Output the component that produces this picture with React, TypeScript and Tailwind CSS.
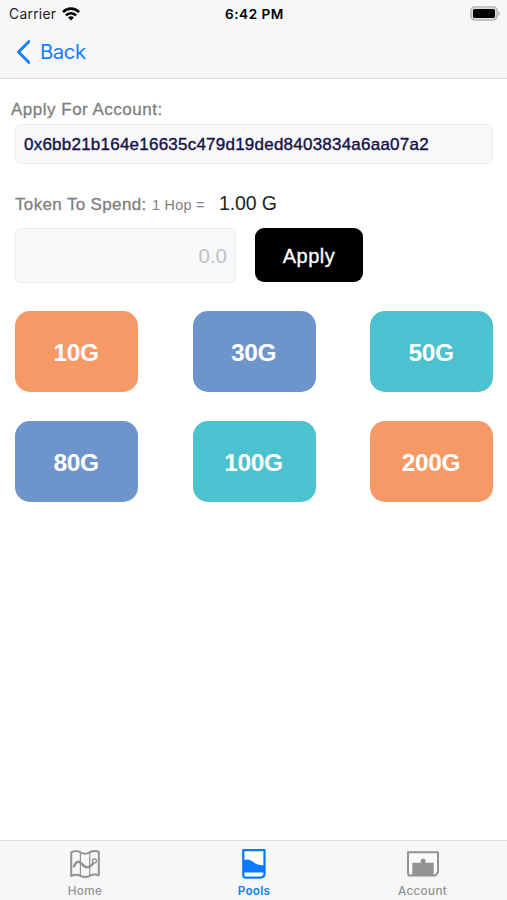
import clsx from "clsx";

const amounts = [
  { label: "10G", color: "bg-[#f69966]" },
  { label: "30G", color: "bg-[#6d95cb]" },
  { label: "50G", color: "bg-[#4cc1d0]" },
  { label: "80G", color: "bg-[#6d95cb]" },
  { label: "100G", color: "bg-[#4cc1d0]" },
  { label: "200G", color: "bg-[#f69966]" },
];

const WifiIcon = () => (
  <svg width="18" height="14" viewBox="0 0 18 14" fill="none" stroke="#000" strokeWidth="2.6">
    <path d="M1 5.1C5.4.5 12.6.5 17 5.1" />
    <path d="M3.9 8.4c2.8-2.9 7.4-2.9 10.2 0" />
    <path d="M9 13.4 6.1 10.5c1.6-1.6 4.2-1.6 5.8 0z" fill="#000" stroke="none" />
  </svg>
);

const BatteryIcon = () => (
  <svg width="31" height="15" viewBox="0 0 31 15">
    <rect x="0.9" y="0.9" width="26.2" height="13.2" rx="4" fill="#dcdcdc" stroke="#b0b0b0" strokeWidth="1.4" />
    <rect x="3" y="3" width="22" height="9" rx="1.6" fill="#000" />
    <path d="M28.4 5.3c2.2.8 2.2 3.6 0 4.4z" fill="#b0b0b0" />
  </svg>
);

const HomeIcon = () => (
  <svg width="30" height="28" viewBox="0 0 30 28" fill="none" stroke="#929292">
    <path
      d="M1.2 2.3C6 .2 7.8.8 10.5 2.4c3.2 1.8 6.1 1.8 9.2 0C22.5.8 25 .6 28.8 1.8v23.4c-4-1.3-6.3-.9-9.1.6-3.1 1.6-6 1.6-9.2 0-2.8-1.5-5-1.7-9.3.2z"
      strokeWidth="2"
      strokeLinejoin="round"
    />
    <path d="M10.4 2.5v23M19.7 2.5v23" strokeWidth="1.2" />
    <path d="M3.6 17.2C6 11 9 10.4 12 14c3.8 4.6 7.2 4.8 11.4-1" strokeWidth="2.4" />
    <circle cx="24.4" cy="11" r="2" strokeWidth="1.3" />
  </svg>
);

const PoolsIcon = () => (
  <svg width="24" height="30" viewBox="0 0 24 30">
    <path
      d="M1.3 1.2h21.2v23.1c0 2.8-1.4 4.3-4.1 4.3H3.8c-1.7 0-2.5-.8-2.5-2.4z"
      fill="#fff"
      stroke="#0c7afc"
      strokeWidth="2.3"
      strokeLinejoin="round"
    />
    <path d="M1.3 11.8c3.2-2.1 6.2-1.8 9.3.6 3.6 2.9 7.4 4.4 11.9 3.6v7.4H1.3z" fill="#0c7afc" />
  </svg>
);

const AccountIcon = () => (
  <svg width="32" height="26" viewBox="0 0 32 26">
    <path
      d="M1 1.2h30v20.1L28.2 24.6H3.1C1.7 24.6 1 23.8 1 22.5z"
      fill="#fafafa"
      stroke="#929292"
      strokeWidth="2"
      strokeLinejoin="round"
    />
    <path d="M5.3 11.8h8.4v-.7a2.6 2.6 0 1 1 4.8 0v.7h8.2v12.3H5.3z" fill="#929292" />
  </svg>
);

const tabs = [
  { label: "Home", icon: HomeIcon, active: false },
  { label: "Pools", icon: PoolsIcon, active: true },
  { label: "Account", icon: AccountIcon, active: false },
];

const Header = () => (
  <header className="h-[79px] border-b border-[#dedede] bg-[#f7f7f7] font-[Inter,sans-serif]">
    <div className="grid h-[27px] grid-cols-3 items-center pl-[9px] pr-[6px]">
      <div className="flex items-center gap-[5px] text-[13.8px] leading-4 text-[#222]">
        <span className="w-[48px] tracking-[0.3px]">Carrier</span>
        <WifiIcon />
      </div>
      <span className="pr-px text-center text-[13.6px] font-semibold leading-4 tracking-[0.5px] text-black">6:42 PM</span>
      <div className="flex justify-end">
        <BatteryIcon />
      </div>
    </div>
    <button className="flex h-[50px] items-center gap-[10px] pl-[16px] text-[#167efb]">
      <svg width="14" height="24" viewBox="0 0 14 24" fill="none" stroke="currentColor" strokeWidth="2.9">
        <path d="M13 1.5 2.5 12 13 22.5" strokeLinecap="round" strokeLinejoin="round" />
      </svg>
      <span className="text-[20.3px] leading-6 tracking-[-0.4px]">Back</span>
    </button>
  </header>
);

const TabBar = () => (
  <nav className="grid h-[60px] grid-cols-[170px_168px_169px] border-t border-[#dedede] bg-[#f7f7f7] font-[Inter,sans-serif]">
    {tabs.map(({ label, icon: Icon, active }) => (
      <button
        key={label}
        className={clsx("flex flex-col items-center", active ? "text-[#167efb]" : "text-[#929292]")}
      >
        <span className="flex h-[43px] items-center pt-[2px]">
          <Icon />
        </span>
        <span className={clsx("text-[11.7px] leading-[14px]", active ? "font-semibold tracking-[0.3px]" : "font-medium tracking-[0.35px]")}>
          {label}
        </span>
      </button>
    ))}
  </nav>
);

const App = () => {
  return (
    <div className="flex h-screen flex-col bg-white font-['Liberation_Sans',sans-serif]">
      <Header />

      <main className="flex-1 pl-[15px] pr-[14px] pt-[21px]">
        <h2 className="-ml-[4px] text-[17px] leading-5 tracking-[0.5px] text-[#808080] [-webkit-text-stroke:0.3px]">
          Apply For Account:
        </h2>
        <div className="mt-[4px] flex h-[40px] items-center rounded-[6px] border border-[#e9ebed] bg-[#f7f8fa] px-[8px] pt-[2px] text-[17px] tracking-[0.23px] text-[#171246] [-webkit-text-stroke:0.4px]">
          0x6bb21b164e16635c479d19ded8403834a6aa07a2
        </div>

        <div className="mt-[25px] flex h-6 items-baseline text-[#808080]">
          <span className="w-[137px] whitespace-nowrap text-[17px] tracking-[0.35px] [-webkit-text-stroke:0.3px]">Token To Spend:</span>
          <span className="w-[67px] text-[14.4px] tracking-[0.25px]">1 Hop =</span>
          <span className="text-[19.5px] tracking-[-0.1px] text-[#222]">1.00 G</span>
        </div>

        <div className="mt-[15px] flex gap-[19px]">
          <div className="flex h-[55px] w-[221px] items-center justify-end rounded-[6px] border border-[#e9ebed] bg-[#f7f8fa] pr-[8px] pt-[2px] text-[20.5px] text-[#c1c2c4]">
            0.0
          </div>
          <button className="h-[54px] w-[108px] rounded-[9px] bg-black pt-[1px] text-[20px] tracking-[0.5px] text-white [-webkit-text-stroke:0.3px]">
            Apply
          </button>
        </div>

        <div className="mt-[28px] grid grid-cols-[123px_123px_123px] justify-between gap-y-[29px]">
          {amounts.map((amount) => (
            <button
              key={amount.label}
              className={clsx("h-[81px] rounded-[15px] pr-px pt-[3px] text-[24.5px] font-bold tracking-[-0.4px] text-white", amount.color)}
            >
              {amount.label}
            </button>
          ))}
        </div>
      </main>

      <TabBar />
    </div>
  );
};

export default App;
